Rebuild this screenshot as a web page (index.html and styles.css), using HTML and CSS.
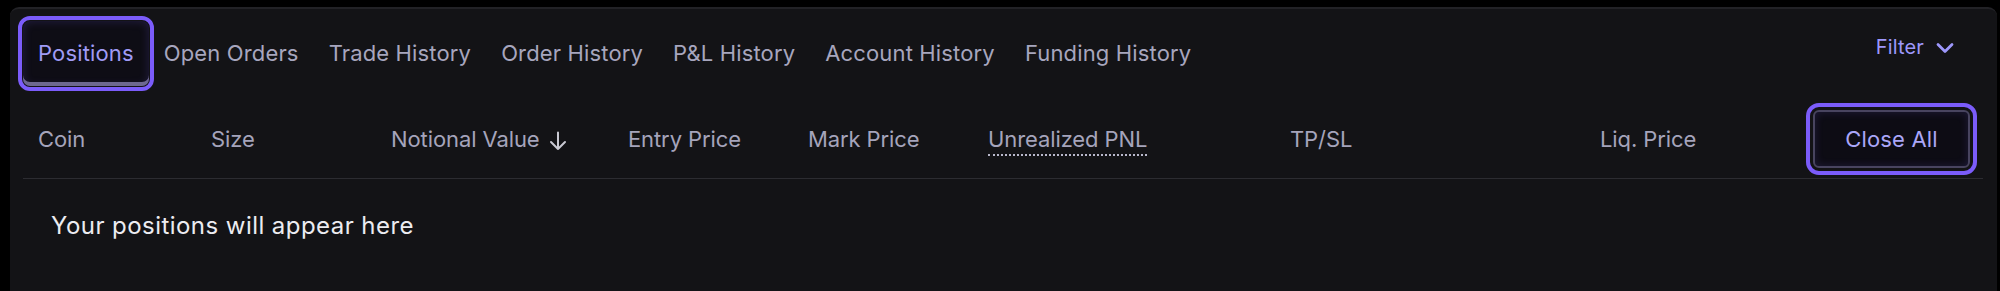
FILE: index.html
```html
<!DOCTYPE html>
<html lang="en">
<head>
<meta charset="utf-8">
<title>Positions</title>
<link rel="stylesheet" href="styles.css">
</head>
<body>
<div class="panel">
  <div class="tabbar">
    <nav class="tabs">
      <button class="tab active">Positions</button>
      <button class="tab">Open Orders</button>
      <button class="tab">Trade History</button>
      <button class="tab">Order History</button>
      <button class="tab">P&amp;L History</button>
      <button class="tab">Account History</button>
      <button class="tab">Funding History</button>
    </nav>
    <button class="filter">Filter
      <svg class="chev" width="18" height="12" viewBox="0 0 18 12"><path d="M2 2.5 L9 9.5 L16 2.5" fill="none" stroke="currentColor" stroke-width="2.8" stroke-linecap="round" stroke-linejoin="round"/></svg>
    </button>
  </div>
  <div class="table">
    <div class="thead">
      <div class="th">Coin</div>
      <div class="th">Size</div>
      <div class="th sort">Notional Value
        <svg class="arrow" width="18" height="20" viewBox="0 0 18 20"><path d="M9 1.5 V18 M2 11 L9 18 L16 11" fill="none" stroke="currentColor" stroke-width="2" stroke-linecap="round" stroke-linejoin="round"/></svg>
      </div>
      <div class="th">Entry Price</div>
      <div class="th">Mark Price</div>
      <div class="th"><span class="dotted">Unrealized PNL</span></div>
      <div class="th">TP/SL</div>
      <div class="th">Liq. Price</div>
      <div class="th end"><button class="closeall">Close All</button></div>
    </div>
    <div class="empty">Your positions will appear here</div>
  </div>
</div>
</body>
</html>
```

FILE: styles.css
```css
* { box-sizing: border-box; }

html, body {
  margin: 0;
  background: #000000;
  height: 291px;
  overflow: hidden;
}

body {
  font-family: Inter, "Noto Sans", sans-serif;
  font-size: 22px;
  letter-spacing: 0.15px;
  padding: 7px 3px 0 10px;
}

.panel {
  background: #131316;
  border-radius: 9px 9px 0 0;
  border-top: 2px solid #222226;
  height: 284px;
  padding: 0 14px 0 13px;
}

.tabbar {
  display: flex;
  justify-content: space-between;
  align-items: flex-start;
  padding-top: 12px;
}

.tabs {
  display: flex;
}

button {
  font: inherit;
  letter-spacing: inherit;
  background: none;
  border: 0;
  cursor: pointer;
}

.tab {
  height: 65px;
  padding: 0 15px 1px;
  color: #a7a6be;
  border-radius: 7px;
}

.tab.active {
  color: #a09bf6;
  background: #0e0d15;
  outline: 4px solid #7b5cfa;
  outline-offset: 1px;
  box-shadow: inset 0 -4px 0 #6d6890, inset 0 0 10px rgba(120, 96, 240, 0.22);
}

.filter {
  margin-top: 11px;
  margin-right: 29px;
  display: flex;
  align-items: center;
  gap: 12px;
  color: #9d97fb;
  font-size: 20px;
  padding: 0;
  height: 30px;
}

.chev { display: block; margin-top: 1px; }

.table {
  margin-top: 14px;
}

.thead {
  display: grid;
  grid-template-columns: 173px 180px 237px 180px 180px 302px 310px 1fr auto;
  align-items: center;
  height: 79px;
  border-bottom: 1px solid #2c2c31;
}

.th {
  padding-left: 15px;
  color: #a5a4bb;
  white-space: nowrap;
  letter-spacing: -0.1px;
}

.sort {
  display: flex;
  align-items: center;
  gap: 9px;
}

.arrow { color: #c9c9d2; margin-top: 4px; }

.dotted {
  padding-bottom: 2px;
  border-bottom: 2px dotted #b9b8cb;
}

.th.end {
  padding: 0 13px 0 0;
  letter-spacing: 0.15px;
}

.closeall {
  display: block;
  width: 157px;
  height: 58px;
  color: #aaa6f8;
  background: #0d0c14;
  border: 2px solid #48445f;
  border-radius: 6px;
  outline: 4px solid #7b5cfa;
  outline-offset: 3px;
  box-shadow: inset 0 0 8px rgba(120, 96, 240, 0.18);
}

.empty {
  padding: 31px 28px;
  color: #ececf1;
  font-size: 24px;
  letter-spacing: 0.45px;
  line-height: 32px;
}
```
